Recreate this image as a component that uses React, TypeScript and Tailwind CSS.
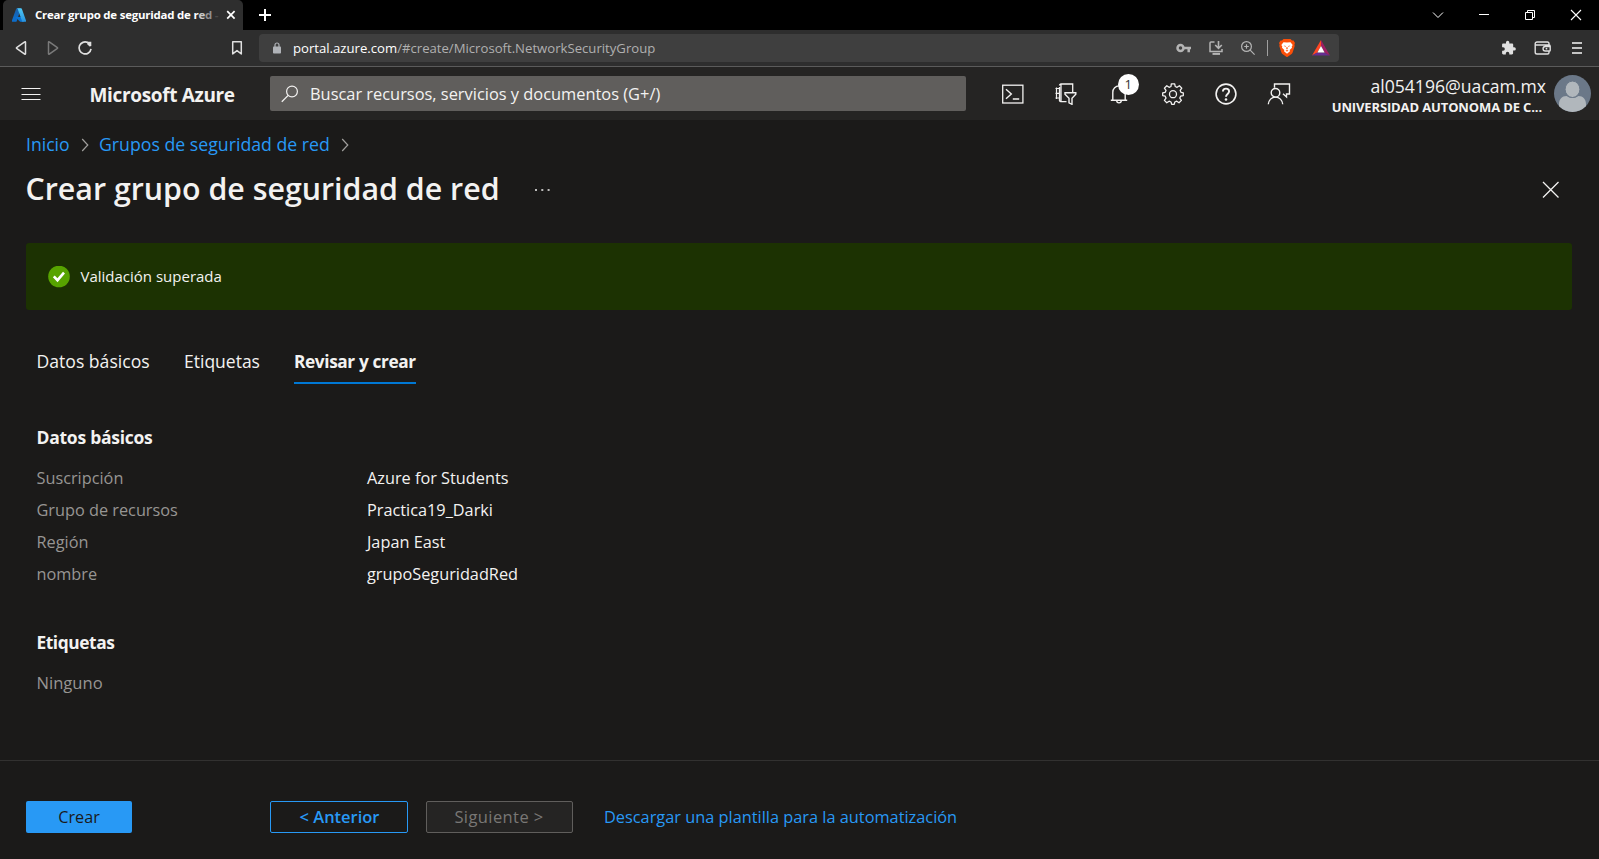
import type { ReactNode } from 'react';

function Icon({ w, h, className = '', children }: { w: number; h: number; className?: string; children: ReactNode }) {
  return (
    <svg width={w} height={h} viewBox={`0 0 ${w} ${h}`} fill="none" stroke="currentColor" className={`block shrink-0 ${className}`}>
      {children}
    </svg>
  );
}

function AzureLogo() {
  return (
    <svg width="14" height="14" viewBox="0 0 96 96" className="block shrink-0">
      <defs>
        <linearGradient id="az1" x1="0" y1="0" x2="0" y2="1">
          <stop offset="0" stopColor="#1a5fa8" />
          <stop offset="1" stopColor="#0b6fd0" />
        </linearGradient>
        <linearGradient id="az2" x1="0" y1="0" x2="0" y2="1">
          <stop offset="0" stopColor="#4fc8f4" />
          <stop offset="1" stopColor="#2892df" />
        </linearGradient>
      </defs>
      <path d="M33 2h29L32 91c-1 2-3 4-6 4H4c-4 0-7-4-5-8L28 6c1-2 3-4 5-4z" fill="url(#az1)" />
      <path d="M71 61H26c-2 0-3 3-1 4l29 27c1 1 2 2 4 2h25z" fill="#0a74d4" />
      <path d="M68 6c-1-2-3-4-6-4H34c2 0 4 2 5 4l29 82c1 4-1 7-5 7h28c4 0 7-4 6-7z" fill="url(#az2)" />
    </svg>
  );
}

function TabStrip() {
  return (
    <div className="flex h-[30px] bg-black pl-[3px]">
      <div className="flex h-[30px] w-[240px] items-center rounded-t-[5px] bg-[#2e2e2e] pl-[9px]">
        <AzureLogo />
        <span className="ml-[9px] w-[185px] whitespace-nowrap text-[11.450px] font-bold tracking-[-0.018em] text-white">
          Crear grupo de seguridad de r<span className="text-[#c8c8c8]">e</span><span className="text-[#909090]">d</span><span className="text-[#4a4a4a]"> -</span>
        </span>
        <Icon w={10} h={10} className="ml-[6px] text-white">
          <path d="M1.2 1.2l7.4 7.4M8.6 1.2L1.2 8.6" strokeWidth="1.7" />
        </Icon>
      </div>
      <div className="flex grow items-center justify-between pl-4 pr-[17px] text-white">
        <Icon w={12} h={12}>
          <path d="M6 0v12M0 6h12" strokeWidth="2" />
        </Icon>
        <div className="flex items-center gap-[34px]">
          <Icon w={12} h={12}>
            <path d="M1 3.500l5 5 5-5" strokeWidth="1" />
          </Icon>
          <Icon w={12} h={12}>
            <path d="M1 5.500h10" strokeWidth="1" />
          </Icon>
          <Icon w={12} h={12}>
            <path d="M1.500 3.500h7v7h-7zM3.500 3.500v-2h7v7h-2" strokeWidth="1" />
          </Icon>
          <Icon w={12} h={12}>
            <path d="M1 1l10 10M11 1L1 11" strokeWidth="1.1" />
          </Icon>
        </div>
      </div>
    </div>
  );
}

function BraveLogo() {
  return (
    <svg width="16" height="18" viewBox="0 0 16 18" className="block shrink-0">
      <path d="M4.500 0h7l1.500 1.500h1.500L16 4l-.6 1.500.3 1.500-2 6.300c-.3.900-.8 1.500-1.500 2L8.700 17.700a1.200 1.200 0 0 1-1.400 0L3.800 15.300c-.7-.5-1.200-1.100-1.500-2L.3 7l.3-1.500L0 4l1.500-2.500H3z" fill="#fb4f09" />
      <path d="M4.500 3.200l3.500.4 3.500-.4L13.700 6l-1 1.600.3 1.200-2.300 2.200.3 1.200L8 14.800l-3-2.600.3-1.200L3 8.800l.3-1.200L2.300 6z" fill="#fff" />
      <path d="M4.600 6.600l2.200.4-.4.900zM11.400 6.600l-2.200.4.4.9zM7.600 8h.8l.3 2-.7.500-.7-.5zM6.500 11.700L8 11.100l1.500.6L8 12.600z" fill="#fb4f09" />
    </svg>
  );
}

function BatLogo() {
  return (
    <svg width="18" height="16" viewBox="0 0 18 16" className="block shrink-0">
      <path d="M9 0L0 15.500l5.400-3.100L9 6z" fill="#ff4724" />
      <path d="M0 15.500h18l-5.400-3.100H5.400z" fill="#662d91" />
      <path d="M9 0v6l3.600 6.400 5.400 3.100z" fill="#9e1f63" />
      <path d="M9 6l-3.600 6.400h7.200z" fill="#fff" />
    </svg>
  );
}

function Toolbar() {
  return (
    <div className="flex h-[37px] items-center border-b border-[#5b5b5b] bg-[#2e2e2e] pl-[15px] pr-4 text-[#e0e0e0]">
      <Icon w={12} h={16}>
        <path d="M10.500 2.200v11.600a.5.5 0 0 1-.8.300L1.600 8.400a.5.5 0 0 1 0-.8L9.700 1.900a.5.5 0 0 1 .8.300z" strokeWidth="1.500" />
      </Icon>
      <Icon w={12} h={16} className="ml-5 text-[#7a7a7a]">
        <path d="M1.500 2.200v11.600a.5.5 0 0 0 .8.300l8.100-5.700a.5.5 0 0 0 0-.8L2.300 1.900a.5.5 0 0 0-.8.300z" strokeWidth="1.500" />
      </Icon>
      <Icon w={16} h={16} className="ml-[18px]">
        <path d="M10.800 2.600A6 6 0 1 0 14 8.800" strokeWidth="1.700" />
        <path d="M10.200 1.700h4.100v4.200l-1.700.6-2.400-2.300z" fill="currentColor" stroke="none" />
      </Icon>
      <Icon w={12} h={16} className="ml-[138px]">
        <path d="M1.700 1.700h8.600v12.200L6 10.600l-4.300 3.300z" strokeWidth="1.500" strokeLinejoin="round" />
      </Icon>
      <div className="ml-4 flex h-7 w-[1080px] items-center rounded-[4px] bg-[#3f3f3f] pl-[14px] pr-[9px] text-[#b4b4b4]">
        <Icon w={8} h={12} className="text-[#b0b3b8]">
          <rect x="0" y="4.500" width="8" height="7" rx=".8" fill="currentColor" stroke="none" />
          <path d="M2 5V3a2 2 0 0 1 4 0v2" strokeWidth="1.200" />
        </Icon>
        <span className="ml-3 whitespace-nowrap pt-[2px] text-[13.150px] text-[#b0b0b0]">
          <span className="text-white">portal.azure.com</span>/#create/Microsoft.NetworkSecurityGroup
        </span>
        <div className="ml-auto flex items-center">
          <Icon w={16} h={10}>
            <circle cx="4.500" cy="5" r="3" strokeWidth="2.500" />
            <path d="M7.500 5H15M12.700 5v4.200" strokeWidth="2.500" />
          </Icon>
          <Icon w={16} h={16} className="ml-4">
            <path d="M6.500 2H3a1 1 0 0 0-1 1v8.500h12V9" strokeWidth="1.500" />
            <path d="M4.500 13.900h7.500" strokeWidth="2" />
            <path d="M10.500 1v7M7.200 5l3.300 3.300L13.800 5" strokeWidth="1.600" />
          </Icon>
          <Icon w={16} h={16} className="ml-4">
            <circle cx="6.500" cy="6.500" r="4.900" strokeWidth="1.200" />
            <path d="M10.200 10.200l4.400 4.400M6.500 4.200v4.600M4.200 6.500h4.600" strokeWidth="1.200" />
          </Icon>
          <div className="ml-[11px] h-4 w-px bg-[#a0a0a0]" />
          <div className="ml-[11px]"><BraveLogo /></div>
          <div className="ml-[17px]"><BatLogo /></div>
        </div>
      </div>
      <div className="ml-auto flex items-center">
        <Icon w={16} h={16}>
          <path d="M13.200 7.300h-1V4.600c0-.7-.6-1.200-1.200-1.200H8.300V2.300a1.600 1.600 0 0 0-3.300 0v1.100H2.300c-.7 0-1.200.5-1.200 1.200v2.600h1a1.750 1.750 0 0 1 0 3.500h-1v2.600c0 .7.600 1.200 1.200 1.200h2.500v-1a1.750 1.750 0 0 1 3.500 0v1h2.600c.7 0 1.200-.5 1.200-1.200v-2.700h1.100a1.650 1.650 0 0 0 0-3.300z" fill="currentColor" stroke="none" />
        </Icon>
        <Icon w={18} h={14} className="ml-[17px]">
          <path d="M15 4V2.500A1.500 1.500 0 0 0 13.500 1H3A1.800 1.800 0 0 0 1.200 2.800v8.400A1.800 1.800 0 0 0 3 13h10.500a1.500 1.500 0 0 0 1.500-1.500V10M1.500 4H15c.8 0 1.200.5 1.200 1.200v4c0 .5-.4.800-.9.800h-4a2 2 0 0 1 0-4.500h4.900" strokeWidth="1.400" />
          <circle cx="12.500" cy="7.700" r=".9" fill="currentColor" stroke="none" />
        </Icon>
        <Icon w={12} h={14} className="ml-[19px] text-[#c4c4c4]">
          <path d="M1 2h10M1 7h10M1 12h10" strokeWidth="1.800" />
        </Icon>
      </div>
    </div>
  );
}

function HeaderCell({ children }: { children: ReactNode }) {
  return <div className="relative flex h-full w-[53.300px] items-center justify-center">{children}</div>;
}

function PortalHeader() {
  return (
    <header className="flex h-[53px] items-center bg-[#252423] text-[#f3f2f1]">
      <Icon w={20} h={14} className="ml-[21px]">
        <path d="M.5 1.500h19M.5 7.500h19M.5 12.500h19" strokeWidth="1.200" />
      </Icon>
      <span className="ml-[48.500px] w-[179.500px] whitespace-nowrap pt-[3px] text-[19px] font-bold tracking-[-0.018em]">Microsoft Azure</span>
      <div className="ml-px flex h-[35px] w-[696px] items-center rounded-[2px] bg-[#605e5c] pl-[11px]">
        <Icon w={18} h={18}>
          <circle cx="11" cy="6.500" r="5.400" strokeWidth="1.200" />
          <path d="M7.200 10.400L.8 16.800" strokeWidth="1.300" />
        </Icon>
        <span className="ml-[11px] whitespace-nowrap pt-px text-[16.400px]">Buscar recursos, servicios y documentos (G+/)</span>
      </div>
      <div className="ml-5 flex h-full">
        <HeaderCell>
          <Icon w={22} h={22}>
            <rect x=".7" y="2.200" width="20.200" height="17.800" strokeWidth="1.300" />
            <path d="M4 6.300l5.300 4.700L4 15.700M10.800 16h6.400" strokeWidth="1.400" />
          </Icon>
        </HeaderCell>
        <HeaderCell>
          <Icon w={22} h={22}>
            <path d="M4.500 4v14M4.500 2.500A1.500 1.500 0 0 1 6 1h11.700v8M4.500 17.500A1.500 1.500 0 0 0 6 18.600h5.500M6 1v17.600" strokeWidth="1.300" />
            <path d="M1.500 4.500v11.500M.5 5.500h4M.5 10.300h4M.5 15h4" strokeWidth="1.200" />
            <path d="M10 9.700h10.800v1.500L17 15.200v6.100l-3-1.500v-4.600l-4-4z" strokeWidth="1.400" />
          </Icon>
        </HeaderCell>
        <HeaderCell>
          <Icon w={22} h={22}>
            <path d="M2.800 17.200h16.400M4.800 17V9.300C4.800 5.600 7.600 2.900 11 2.900s6.200 2.700 6.200 6.400V17" strokeWidth="1.400" />
            <path d="M8.700 17.600a2.300 2.300 0 0 0 4.600 0" strokeWidth="1.400" />
          </Icon>
          <span className="absolute left-[25px] top-[7px] flex size-[21px] items-center justify-center rounded-full bg-white text-[13px] leading-none text-[#323130]">
            1
          </span>
        </HeaderCell>
        <HeaderCell>
          <Icon w={22} h={22}>
            <path d="M9.300.8h3.400l.5 2.700 1.900.8 2.300-1.600 2.400 2.400-1.600 2.300.8 1.900 2.300.5v2.800l-2.700.6-.8 1.900 1.600 2.300-2.400 2.400-2.300-1.600-1.900.8-.6 2.300H9.700l-.7-2.300-1.900-.8-2.300 1.600-2.400-2.400L4 15.100l-.8-1.900-2.500-.6V9.800l2.500-.5L4 7.400 2.400 5.100l2.400-2.400 2.300 1.600 1.900-.8z" strokeWidth="1.300" strokeLinejoin="round" />
            <circle cx="11" cy="11.200" r="3.500" strokeWidth="1.300" />
          </Icon>
        </HeaderCell>
        <HeaderCell>
          <Icon w={22} h={22}>
            <circle cx="11" cy="11" r="9.900" strokeWidth="1.600" />
            <path d="M7.900 8.600c0-1.800 1.300-3 3.100-3s3.100 1.200 3.100 2.800c0 2.400-3.100 2.700-3.100 5.300" strokeWidth="1.900" />
            <circle cx="11" cy="16.500" r="1.300" fill="currentColor" stroke="none" />
          </Icon>
        </HeaderCell>
        <HeaderCell>
          <Icon w={24} h={22}>
            <path d="M7.500 4.800V1h15v10h-3v3l-3.500-3.200" strokeWidth="1.400" />
            <circle cx="8.500" cy="9.800" r="4.300" strokeWidth="1.400" />
            <path d="M1.300 21.300c.3-4.200 3.300-7.200 7.200-7.200s6.900 3 7.200 7.200" strokeWidth="1.400" />
          </Icon>
        </HeaderCell>
      </div>
      <div className="ml-auto flex w-[216px] flex-col items-end pt-[6px]">
        <span className="text-[17.600px] leading-[21px]">al054196@uacam.mx</span>
        <span className="mr-1 whitespace-nowrap text-[13px] font-bold leading-[21px] tracking-[-0.010em]">UNIVERSIDAD AUTONOMA DE C...</span>
      </div>
      <svg width="37" height="37" viewBox="0 0 37 37" className="ml-2 mr-2 block shrink-0">
        <clipPath id="avatar"><circle cx="18.500" cy="18.500" r="18.500" /></clipPath>
        <g clipPath="url(#avatar)">
          <rect width="37" height="37" fill="#6b7888" />
          <path d="M5 32v-2.500c0-5.500 3-8.500 7.500-8.500 1.800 1.300 3.700 2 6 2s4.200-.7 6-2c4.500 0 7.500 3 7.500 8.500V32l-5 5H10z" fill="#b1b7bc" />
          <ellipse cx="18.500" cy="14.300" rx="7.400" ry="8.200" fill="#b1b7bc" stroke="#6b7888" strokeWidth="1" />
        </g>
      </svg>
    </header>
  );
}

function Crumb() {
  return (
    <Icon w={8} h={14} className="text-[#a19f9d]">
      <path d="M1.200 1l5.600 6-5.600 6" strokeWidth="1.200" />
    </Icon>
  );
}

const details = [
  ['Suscripción', 'Azure for Students'],
  ['Grupo de recursos', 'Practica19_Darki'],
  ['Región', 'Japan East'],
  ['nombre', 'grupoSeguridadRed'],
];

export default function App() {
  return (
    <div className="flex h-[859px] w-[1599px] flex-col overflow-hidden bg-[#1b1a19] font-['Open_Sans','Noto_Sans',sans-serif] text-[#f3f2f1]">
      <TabStrip />
      <Toolbar />
      <PortalHeader />
      <main className="flex grow flex-col">
        <nav className="mt-3 flex h-6 items-center pl-[26px] text-[17.720px] text-[#2899f5]">
          <span className="w-[44px] pt-px text-[17.600px]">Inicio</span>
          <span className="ml-[11px] mt-px"><Crumb /></span>
          <span className="ml-[10px] whitespace-nowrap">Grupos de seguridad de red</span>
          <span className="ml-[11px] mt-px"><Crumb /></span>
        </nav>
        <div className="mt-3 flex h-[42px] items-center pl-[25.500px] pr-[39px]">
          <h1 className="w-[473.500px] whitespace-nowrap text-[30.350px] font-semibold leading-[42px]">Crear grupo de seguridad de red</h1>
          <Icon w={15} h={4} className="ml-[36px] mt-[2px]">
            <path d="M0 2h2M6.300 2h2M12.600 2h2" strokeWidth="1.600" />
          </Icon>
          <Icon w={18} h={18} className="ml-auto mt-px">
            <path d="M1 1l15.500 15.500M16.500 1L1 16.500" strokeWidth="1.300" />
          </Icon>
        </div>
        <div className="ml-[26px] mr-[27px] mt-[33px] flex h-[67px] items-center rounded-[3px] bg-[#1c3202] pl-[22px]">
          <Icon w={22} h={22} className="text-white">
            <circle cx="11" cy="10.500" r="10.800" fill="#57a300" stroke="none" />
            <path d="M5.800 10.300l3.700 3.900L16 6.700" strokeWidth="2.600" />
          </Icon>
          <span className="ml-[10.500px] text-[15px]">Validación superada</span>
        </div>
        <div className="mt-[41px] flex h-[33px] gap-[34px] pl-[36.500px] leading-[21px]">
          <span className="w-[113.500px] whitespace-nowrap text-[17.600px]">Datos básicos</span>
          <span className="w-[76px] text-[17.500px]">Etiquetas</span>
          <span className="w-[122px] whitespace-nowrap border-b-2 border-[#0078d4] text-[17.250px] font-bold tracking-[-0.022em]">Revisar y crear</span>
        </div>
        <section className="mt-[42px] pl-[36.500px]">
          <h2 className="text-[17.500px] font-bold leading-[22px] tracking-[-0.015em]">Datos básicos</h2>
          <dl className="mt-[14px] text-[16.300px] leading-8">
            {details.map(([k, v]) => (
              <div key={k} className="flex">
                <dt className="w-[330.500px] text-[#979593]">{k}</dt>
                <dd>{v}</dd>
              </div>
            ))}
          </dl>
        </section>
        <section className="mt-[41px] pl-[36.500px]">
          <h2 className="text-[17.350px] font-bold leading-[22px] tracking-[-0.025em]">Etiquetas</h2>
          <p className="mt-[14px] text-[16.600px] leading-8 text-[#979593]">Ninguno</p>
        </section>
        <footer className="mt-auto flex h-[99px] items-center border-t border-[#323130] pt-[14px]">
          <button className="ml-[26px] h-8 w-[106px] rounded-[2px] bg-[#2899f5] text-[16.200px] text-[#1b1a19]">Crear</button>
          <button className="ml-[138px] h-8 w-[138px] rounded-[2px] border border-[#2899f5] pl-px text-[16.450px] font-semibold text-[#2899f5]">
            &lt; Anterior
          </button>
          <button className="ml-[18px] h-8 w-[147px] rounded-[2px] border border-[#605e5c] bg-[#252423] pr-px text-[16.500px] font-medium tracking-[0.025em] text-[#797775]">
            Siguiente &gt;
          </button>
          <a className="ml-[31px] whitespace-nowrap text-[16.330px] text-[#2899f5]">Descargar una plantilla para la automatización</a>
        </footer>
      </main>
    </div>
  );
}
